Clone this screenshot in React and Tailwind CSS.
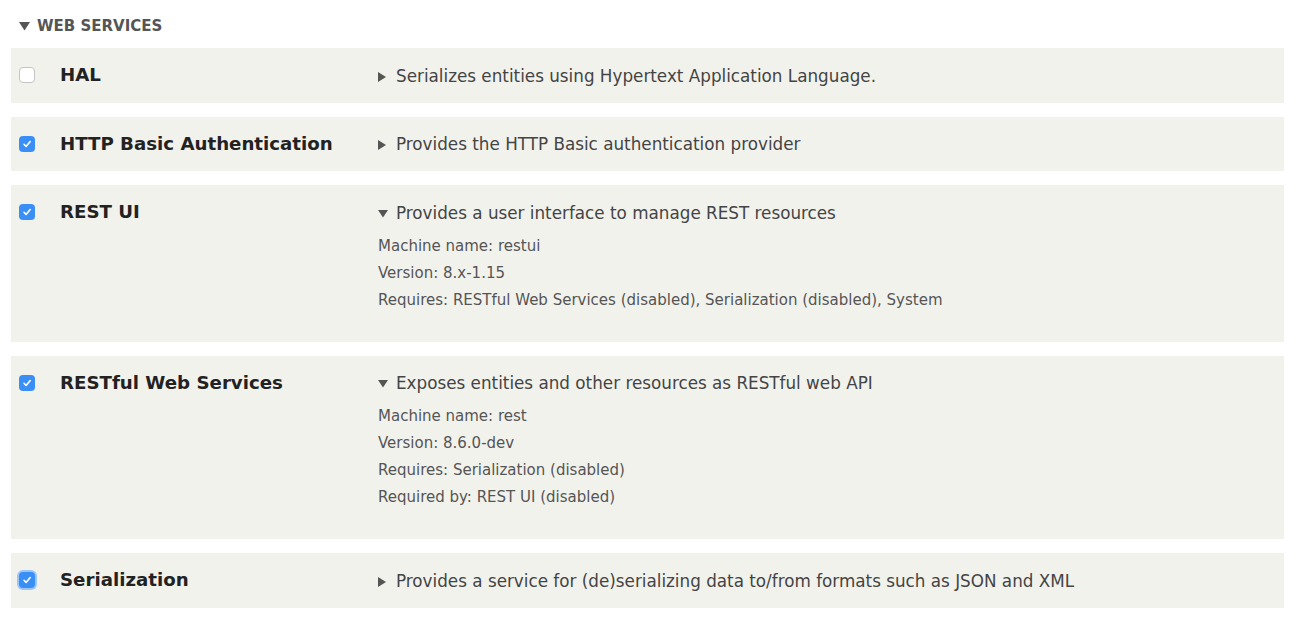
const modules = [
  {
    name: "HAL",
    checked: false,
    description: "Serializes entities using Hypertext Application Language.",
  },
  {
    name: "HTTP Basic Authentication",
    checked: true,
    description: "Provides the HTTP Basic authentication provider",
  },
  {
    name: "REST UI",
    checked: true,
    open: true,
    description: "Provides a user interface to manage REST resources",
    details: [
      "Machine name: restui",
      "Version: 8.x-1.15",
      "Requires: RESTful Web Services (disabled), Serialization (disabled), System",
    ],
  },
  {
    name: "RESTful Web Services",
    checked: true,
    open: true,
    description: "Exposes entities and other resources as RESTful web API",
    details: [
      "Machine name: rest",
      "Version: 8.6.0-dev",
      "Requires: Serialization (disabled)",
      "Required by: REST UI (disabled)",
    ],
  },
  {
    name: "Serialization",
    checked: true,
    focused: true,
    description: "Provides a service for (de)serializing data to/from formats such as JSON and XML",
  },
]

function Checkbox({ checked, focused }) {
  if (checked) {
    return (
      <span
        className={`flex h-4 w-4 items-center justify-center rounded-[4px] bg-[#3a8ff7] ${
          focused ? "shadow-[0_0_0_2px_#9cc6fa]" : ""
        }`}
      >
        <svg width="10" height="10" viewBox="0 0 10 10" fill="none">
          <path d="M2 5.3 4.1 7.4 8.2 2.5" stroke="white" strokeWidth="1.6" strokeLinecap="round" strokeLinejoin="round" />
        </svg>
      </span>
    )
  }
  return <span className="block h-4 w-4 rounded-[4px] border border-[#c4c4c4] bg-white" />
}

function Caret({ open }) {
  if (open) {
    return (
      <svg width="10" height="8" viewBox="0 0 10 8" className="mr-2 shrink-0">
        <path d="M0 0h10L5 7.5z" fill="#555" />
      </svg>
    )
  }
  return (
    <svg width="8" height="10" viewBox="0 0 8 10" className="mr-[10px] shrink-0">
      <path d="M0 0v10l8-5z" fill="#555" />
    </svg>
  )
}

export default function App() {
  return (
    <div
      className="min-h-[620px] bg-white pl-[11px] pr-4 pt-[15px] text-[#333]"
      style={{ fontFamily: '"DejaVu Sans", "Liberation Sans", sans-serif' }}
    >
      <div className="flex h-[22px] items-center pl-2 text-[15px] font-bold uppercase text-[#555]">
        <svg width="11" height="9" viewBox="0 0 11 9" className="mr-[7px] shrink-0">
          <path d="M0 0h11L5.5 8.5z" fill="#555" />
        </svg>
        Web Services
      </div>

      <div className="mt-[11px] flex flex-col gap-[14px]">
        {modules.map((m) => (
          <div
            key={m.name}
            className={`flex bg-[#f2f2ed] pt-4 ${m.open ? "pb-[28px]" : "pb-[15px]"}`}
          >
            <div className="flex w-[367px] shrink-0 items-start">
              <div className="flex h-[22px] w-[49px] items-center pl-2">
                <Checkbox checked={m.checked} focused={m.focused} />
              </div>
              <div className="text-[18.2px] font-bold leading-[22px] text-[#222]">{m.name}</div>
            </div>
            <div className="flex-1 pt-[1.5px] text-[16.8px] text-[#444]">
              <div className="flex h-[22px] items-center">
                <Caret open={m.open} />
                {m.description}
              </div>
              {m.details && (
                <div className="mt-2 text-[15px] leading-[27px] text-[#555]">
                  {m.details.map((d) => (
                    <div key={d}>{d}</div>
                  ))}
                </div>
              )}
            </div>
          </div>
        ))}
      </div>
    </div>
  )
}
